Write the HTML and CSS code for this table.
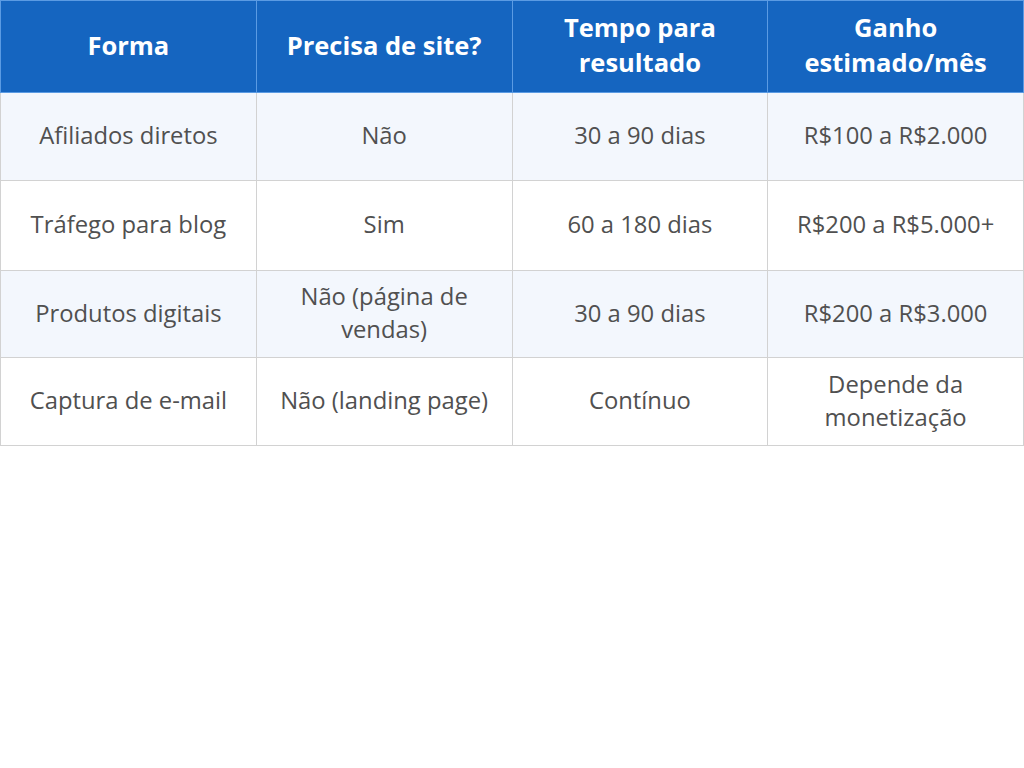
FILE: index.html
```html
<!DOCTYPE html>
<html lang="pt-BR">
<head>
<meta charset="utf-8">
<link rel="stylesheet" href="styles.css">
</head>
<body>
<table class="tbl">
  <thead>
    <tr>
      <th>Forma</th>
      <th>Precisa de site?</th>
      <th>Tempo para<br>resultado</th>
      <th>Ganho<br>estimado/mês</th>
    </tr>
  </thead>
  <tbody>
    <tr class="alt r1">
      <td>Afiliados diretos</td>
      <td>Não</td>
      <td>30 a 90 dias</td>
      <td>R$100 a R$2.000</td>
    </tr>
    <tr class="r2">
      <td>Tráfego para blog</td>
      <td>Sim</td>
      <td>60 a 180 dias</td>
      <td>R$200 a R$5.000+</td>
    </tr>
    <tr class="alt r3">
      <td>Produtos digitais</td>
      <td>Não (página de<br>vendas)</td>
      <td>30 a 90 dias</td>
      <td>R$200 a R$3.000</td>
    </tr>
    <tr class="r4">
      <td>Captura de e-mail</td>
      <td>Não (landing page)</td>
      <td>Contínuo</td>
      <td>Depende da<br>monetização</td>
    </tr>
  </tbody>
</table>
</body>
</html>
```

FILE: styles.css
```css
html, body {
  margin: 0;
  padding: 0;
  background: #ffffff;
}
body {
  font-family: "Open Sans", "Liberation Sans", sans-serif;
}
.tbl {
  width: 1024px;
  border-collapse: collapse;
  table-layout: fixed;
}
.tbl th {
  background: #1565c0;
  color: #ffffff;
  font-weight: 700;
  font-size: 25.5px;
  line-height: 35px;
  height: 92px;
  padding: 0 6px 3px;
  box-sizing: border-box;
  border: 1px solid #5b9be3;
  text-align: center;
  vertical-align: middle;
}
.tbl td {
  color: #505050;
  font-size: 23.8px;
  line-height: 33px;
  padding: 0 6px 2px;
  border: 1px solid #d2d2d2;
  text-align: center;
  vertical-align: middle;
}
.tbl tr.alt td {
  background: #f3f7fd;
}
.r1 td { height: 85px; }
.r2 td { height: 87px; }
.r3 td { height: 84px; }
.r4 td { height: 85px; }
```
